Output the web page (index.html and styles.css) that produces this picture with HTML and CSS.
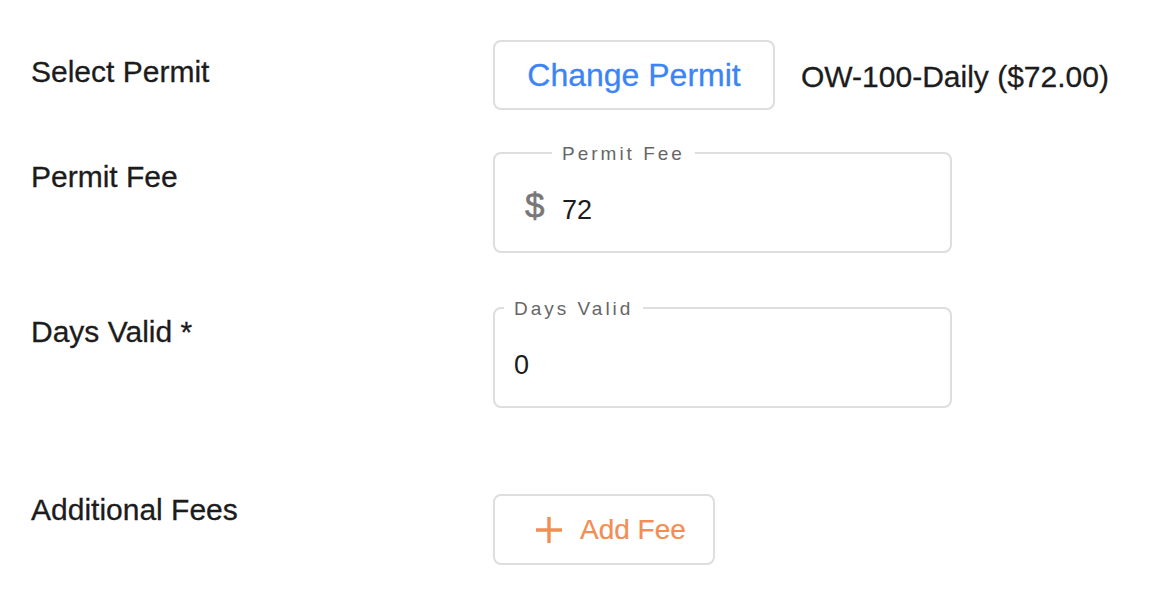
FILE: index.html
```html
<!DOCTYPE html>
<html lang="en">
<head>
<meta charset="utf-8">
<title>Permit</title>
<link rel="stylesheet" href="styles.css">
</head>
<body>
<main class="form">
  <div class="row row-permit">
    <div class="label">Select Permit</div>
    <div class="control inline">
      <button class="btn btn-blue" type="button">Change Permit</button>
      <span class="permit-name">OW-100-Daily ($72.00)</span>
    </div>
  </div>

  <div class="row row-fee">
    <div class="label">Permit Fee</div>
    <div class="control">
      <div class="field">
        <span class="legend legend-fee">Permit Fee</span>
        <span class="adorn">$</span>
        <span class="value">72</span>
      </div>
    </div>
  </div>

  <div class="row row-days">
    <div class="label">Days Valid *</div>
    <div class="control">
      <div class="field field-plain">
        <span class="legend legend-days">Days Valid</span>
        <span class="value">0</span>
      </div>
    </div>
  </div>

  <div class="row row-add">
    <div class="label">Additional Fees</div>
    <div class="control">
      <button class="btn btn-orange" type="button">
        <svg class="plus" width="28" height="28" viewBox="0 0 28 28" aria-hidden="true">
          <path d="M14 1V27M1 14H27" stroke="currentColor" stroke-width="3.4" fill="none"/>
        </svg>
        <span>Add Fee</span>
      </button>
    </div>
  </div>
</main>
</body>
</html>
```

FILE: styles.css
```css
* { box-sizing: border-box; }

html, body {
  margin: 0;
  padding: 0;
  background: #ffffff;
}

body {
  font-family: "Liberation Sans", Arial, sans-serif;
  color: #1c1c1c;
  width: 1166px;
  height: 592px;
  overflow: hidden;
}

.form {
  padding: 40px 0 0 31px;
  display: flex;
  flex-direction: column;
}

.row {
  display: flex;
  align-items: flex-start;
}

.label {
  width: 462px;
  flex: none;
  font-size: 30px;
  line-height: 36px;
  color: #1c1c1c;
  -webkit-text-stroke: 0.3px #1c1c1c;
}

.row-permit .label { margin-top: 14px; }
.row-fee { margin-top: 42px; }
.row-fee .label { margin-top: 7px; }
.row-days { margin-top: 54px; }
.row-days .label { margin-top: 7px; }
.row-add { margin-top: 84px; }
.row-add .control { margin-top: 2px; }

.inline {
  display: flex;
  align-items: center;
}

.btn {
  font-family: inherit;
  background: #ffffff;
  border: 2px solid #dedede;
  border-radius: 8px;
  display: flex;
  align-items: center;
  cursor: pointer;
}

.btn-blue {
  width: 282px;
  height: 70px;
  justify-content: center;
  color: #3b84f5;
  font-size: 32px;
  padding: 0;
  -webkit-text-stroke: 0.3px #3b84f5;
}

.permit-name {
  margin-left: 26px;
  font-size: 30px;
  color: #1c1c1c;
  margin-top: 4px;
  -webkit-text-stroke: 0.3px #1c1c1c;
}

.field {
  position: relative;
  width: 459px;
  height: 101px;
  border: 2px solid #dedede;
  border-radius: 8px;
  display: flex;
  align-items: flex-start;
  padding: 33px 0 0 30px;
}

.field-plain {
  padding-left: 19px;
}

.legend {
  position: absolute;
  top: -11px;
  background: #ffffff;
  padding: 0 10px;
  font-size: 19px;
  line-height: 22px;
  letter-spacing: 3px;
  color: #666666;
}

.legend-fee { left: 57px; }
.legend-days { left: 9px; }

.adorn {
  font-size: 35px;
  line-height: 40px;
  color: #777777;
  width: 37px;
  flex: none;
  margin-top: -1px;
  -webkit-text-stroke: 0.6px #777777;
}

.value {
  font-size: 27px;
  line-height: 40px;
  color: #1c1c1c;
  margin-top: 3px;
}

.btn-orange {
  width: 222px;
  height: 71px;
  padding: 0 0 0 40px;
  color: #f28d55;
  font-size: 28px;
  gap: 17px;
  -webkit-text-stroke: 0.2px #f28d55;
}

.plus {
  flex: none;
  display: block;
}
```
